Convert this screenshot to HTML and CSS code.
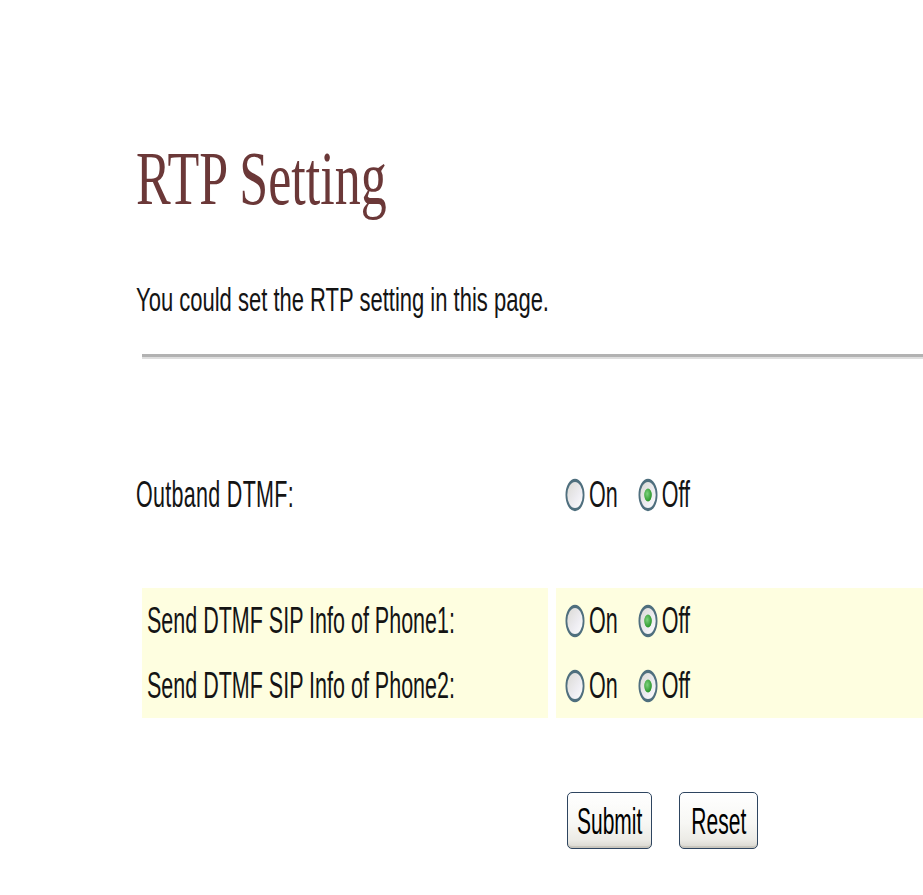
FILE: index.html
```html
<!DOCTYPE html>
<html lang="en">
<head>
<meta charset="utf-8">
<title>RTP Setting</title>
<link rel="stylesheet" href="styles.css">
</head>
<body>
<svg class="defs" width="0" height="0" aria-hidden="true">
  <defs>
    <linearGradient id="radioFill" x1="0" y1="0" x2="1" y2="1">
      <stop offset="0" stop-color="#d9d8d2"/>
      <stop offset="0.6" stop-color="#eeedf2"/>
      <stop offset="1" stop-color="#ffffff"/>
    </linearGradient>
    <radialGradient id="dotFill" cx="0.4" cy="0.4" r="0.6">
      <stop offset="0" stop-color="#7fd27f"/>
      <stop offset="1" stop-color="#2b982b"/>
    </radialGradient>
  </defs>
</svg>

<div class="page">
  <h1 class="title"><span class="tx">RTP Setting</span></h1>
  <p class="intro"><span class="tx">You could set the RTP setting in this page.</span></p>
  <hr class="rule">

  <form class="form">
    <div class="row first">
      <div class="cell label"><span class="tx">Outband DTMF:</span></div>
      <div class="cell opts">
        <label class="opt">
          <svg class="radio" viewBox="0 0 20 20" preserveAspectRatio="none"><ellipse cx="10" cy="10" rx="8.6" ry="8.6" fill="url(#radioFill)" stroke="#4f6f7e" stroke-width="1.8"/></svg>
          <span class="tx">On</span>
        </label>
        <label class="opt">
          <svg class="radio" viewBox="0 0 20 20" preserveAspectRatio="none"><ellipse cx="10" cy="10" rx="8.6" ry="8.6" fill="url(#radioFill)" stroke="#4f6f7e" stroke-width="1.8"/><ellipse cx="10" cy="10" rx="3.8" ry="3.8" fill="url(#dotFill)"/></svg>
          <span class="tx">Off</span>
        </label>
      </div>
    </div>

    <div class="band">
      <div class="row">
        <div class="cell label"><span class="tx">Send DTMF SIP Info of Phone1:</span></div>
        <div class="cell opts">
          <label class="opt">
            <svg class="radio" viewBox="0 0 20 20" preserveAspectRatio="none"><ellipse cx="10" cy="10" rx="8.6" ry="8.6" fill="url(#radioFill)" stroke="#4f6f7e" stroke-width="1.8"/></svg>
            <span class="tx">On</span>
          </label>
          <label class="opt">
            <svg class="radio" viewBox="0 0 20 20" preserveAspectRatio="none"><ellipse cx="10" cy="10" rx="8.6" ry="8.6" fill="url(#radioFill)" stroke="#4f6f7e" stroke-width="1.8"/><ellipse cx="10" cy="10" rx="3.8" ry="3.8" fill="url(#dotFill)"/></svg>
            <span class="tx">Off</span>
          </label>
        </div>
      </div>
      <div class="row">
        <div class="cell label"><span class="tx">Send DTMF SIP Info of Phone2:</span></div>
        <div class="cell opts">
          <label class="opt">
            <svg class="radio" viewBox="0 0 20 20" preserveAspectRatio="none"><ellipse cx="10" cy="10" rx="8.6" ry="8.6" fill="url(#radioFill)" stroke="#4f6f7e" stroke-width="1.8"/></svg>
            <span class="tx">On</span>
          </label>
          <label class="opt">
            <svg class="radio" viewBox="0 0 20 20" preserveAspectRatio="none"><ellipse cx="10" cy="10" rx="8.6" ry="8.6" fill="url(#radioFill)" stroke="#4f6f7e" stroke-width="1.8"/><ellipse cx="10" cy="10" rx="3.8" ry="3.8" fill="url(#dotFill)"/></svg>
            <span class="tx">Off</span>
          </label>
        </div>
      </div>
    </div>

    <div class="row actions">
      <div class="cell"></div>
      <div class="cell buttons">
        <button type="button" class="btn"><span class="tx">Submit</span></button>
        <button type="reset" class="btn btn-reset"><span class="tx">Reset</span></button>
      </div>
    </div>
  </form>
</div>
</body>
</html>
```

FILE: styles.css
```css
html, body {
  margin: 0;
  padding: 0;
  background: #ffffff;
}

body {
  font-family: "Liberation Sans", Arial, sans-serif;
  color: #141414;
}

.defs {
  position: absolute;
  width: 0;
  height: 0;
}

.page {
  padding: 139px 0 0 142px;
}

.tx {
  display: inline-block;
  transform-origin: center;
  white-space: nowrap;
}

.title {
  margin: 0 0 0 -6px;
  height: 80px;
  display: flex;
  align-items: center;
  font-weight: normal;
}

.title .tx {
  font-family: "Liberation Serif", "Times New Roman", serif;
  font-size: 52px;
  line-height: 52px;
  color: #6b3838;
  transform: scaleY(1.47);
}

.intro {
  margin: 66px 0 0 -6px;
  height: 30px;
  display: flex;
  align-items: center;
}

.intro .tx {
  font-size: 22px;
  line-height: 22px;
  transform: scaleY(1.5);
}

.rule {
  margin: 39px 0 0;
  height: 0;
  border: 0;
  border-top: 3px solid #b2b2b2;
  border-bottom: 2px solid #dedede;
}

.form {
  margin: 104px 0 0;
}

.row {
  display: grid;
  grid-template-columns: 406px 1fr;
  column-gap: 8px;
  height: 65px;
}

.row.first {
  height: 64px;
}

.row.first .label {
  padding-left: 0;
  margin-left: -6px;
}

.row.first .label .tx {
  letter-spacing: 0.3px;
}

.band {
  margin-top: 61px;
}

.band .cell {
  background: #fefee0;
}

.cell {
  display: flex;
  align-items: center;
}

.label {
  padding-left: 5px;
}

.label .tx,
.opt .tx {
  font-size: 21.5px;
  line-height: 22px;
  transform: scaleY(1.7);
}

.opts {
  padding-left: 9px;
  gap: 20px;
}

.opt {
  display: flex;
  align-items: center;
  gap: 4px;
}

.radio {
  width: 20px;
  height: 34px;
  display: block;
}

.actions {
  margin-top: 74px;
  height: 57px;
}

.buttons {
  padding-left: 11px;
  gap: 27px;
  align-items: stretch;
}

.btn {
  font-family: "Liberation Sans", Arial, sans-serif;
  font-size: 21px;
  color: #000;
  padding: 0 9px;
  border: 1px solid #2e4560;
  border-radius: 5px;
  background: linear-gradient(#ffffff 0%, #f7f7f4 55%, #ecebe6 85%, #d8d6cf 100%);
  box-shadow: inset 0 -2px 0 rgba(180, 175, 165, 0.45);
}

.btn-reset {
  padding: 0 11px;
}

.btn .tx {
  line-height: 22px;
  transform: scaleY(1.8);
}
```
